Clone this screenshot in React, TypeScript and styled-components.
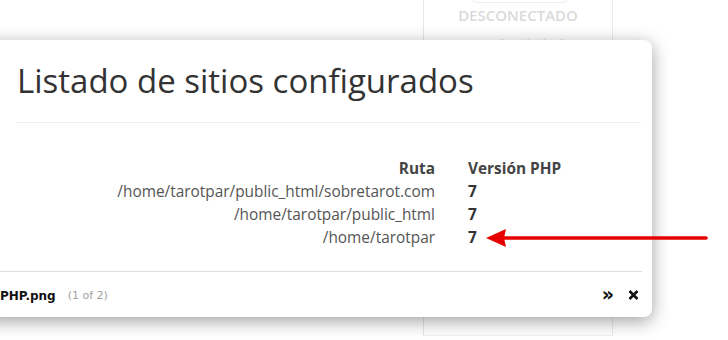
import React from "react";
import styled, { createGlobalStyle } from "styled-components";

const GlobalStyle = createGlobalStyle`
  html, body {
    margin: 0;
    padding: 0;
    background: #ffffff;
    width: 728px;
    height: 340px;
    overflow: hidden;
    font-family: "Open Sans", "Liberation Sans", sans-serif;
  }
  #root { position: relative; width: 728px; height: 340px; }
`;

const Page = styled.div`
  display: flex;
  width: 728px;
  height: 340px;
  font-family: "Open Sans", "Liberation Sans", sans-serif;
`;

const Main = styled.div`
  width: 423px;
  flex: none;
`;

const Sidebar = styled.aside`
  width: 188px;
  flex: none;
  border-left: 1px solid #e6e6e6;
  border-right: 1px solid #ececec;
  border-bottom: 1px solid #f2f2f2;
  height: 335px;
  display: flex;
  flex-direction: column;
  align-items: center;
`;

const StatusButton = styled.div`
  width: 95px;
  height: 30px;
  margin-top: -27px;
  margin-left: 48px;
  align-self: flex-start;
  border: 1px solid #eeeeee;
  border-radius: 4px;
  box-sizing: border-box;
`;

const StatusText = styled.div<{ $weight?: number }>`
  font-size: 15px;
  line-height: 20px;
  font-weight: ${(p) => p.$weight ?? 400};
  color: #dadada;
  margin-top: ${(p) => (p.$weight ? 2 : 9)}px;
`;

const Rest = styled.div`
  flex: 1;
`;

const Lightbox = styled.div`
  position: absolute;
  top: 40px;
  left: -20px;
  width: 672px;
  height: 277px;
  background: #ffffff;
  border-radius: 8px;
  box-shadow: 0 4px 18px rgba(0, 0, 0, 0.38);
  display: flex;
  flex-direction: column;
  box-sizing: border-box;
  font-family: "Open Sans", "Liberation Sans", sans-serif;
`;

const Shot = styled.div`
  flex: 1;
  padding: 19px 11px 0 20px;
`;

const Title = styled.h1`
  margin: 0 0 0 17px;
  font-family: "Open Sans", "Liberation Sans", sans-serif;
  font-weight: 400;
  font-size: 33px;
  line-height: 44px;
  color: #333333;
`;

const Rule = styled.hr`
  margin: 19px 0 0 16px;
  border: none;
  border-top: 1px solid #eeeeee;
  height: 0;
`;

const Table = styled.div`
  display: grid;
  grid-template-columns: 435px auto;
  column-gap: 33px;
  margin-top: 34px;
  font-size: 15.4px;
  line-height: 23px;
`;

const Head = styled.div<{ $right?: boolean }>`
  font-weight: 700;
  color: #444444;
  text-align: ${(p) => (p.$right ? "right" : "left")};
`;

const PathCell = styled.div`
  text-align: right;
  color: #555555;
`;

const VersionCell = styled.div`
  font-weight: 700;
  color: #333333;
`;

const Footer = styled.div`
  height: 45px;
  margin: 0 10px 0 20px;
  border-top: 1px solid #dddddd;
  display: flex;
  align-items: center;
  font-family: "DejaVu Sans", Verdana, sans-serif;
`;

const Caption = styled.span`
  font-weight: 700;
  font-size: 12px;
  color: #111111;
  margin-top: 2px;
`;

const Counter = styled.span`
  font-size: 11px;
  color: #a0a0a0;
  margin-left: 12px;
  margin-top: 2px;
`;

const Controls = styled.div`
  margin-left: auto;
  display: flex;
  align-items: center;
  gap: 14px;
  margin-right: 3px;
`;

const NextGlyph = styled.span`
  font-weight: 700;
  font-size: 19px;
  line-height: 16px;
  color: #111111;
  margin-top: -1px;
`;

const Arrow = styled.svg`
  position: absolute;
  left: 484px;
  top: 226px;
`;

const rows = [
  "/home/tarotpar/public_html/sobretarot.com",
  "/home/tarotpar/public_html",
  "/home/tarotpar",
];

export default function App() {
  return (
    <>
      <GlobalStyle />
      <Page>
        <Main />
        <Sidebar>
          <StatusButton />
          <StatusText $weight={600}>DESCONECTADO</StatusText>
          <StatusText>Marlon kaled</StatusText>
        </Sidebar>
        <Rest />
      </Page>
      <Lightbox>
        <Shot>
          <Title>Listado de sitios configurados</Title>
          <Rule />
          <Table>
            <Head $right>Ruta</Head>
            <Head>Versión PHP</Head>
            {rows.map((r) => (
              <React.Fragment key={r}>
                <PathCell>{r}</PathCell>
                <VersionCell>7</VersionCell>
              </React.Fragment>
            ))}
          </Table>
        </Shot>
        <Footer>
          <Caption>PHP.png</Caption>
          <Counter>(1 of 2)</Counter>
          <Controls>
            <NextGlyph>»</NextGlyph>
            <svg width="11" height="10" viewBox="0 0 11 10">
              <path d="M1.5 1 L9.5 9 M9.5 1 L1.5 9" stroke="#111" strokeWidth="2.6" strokeLinecap="butt" />
            </svg>
          </Controls>
        </Footer>
      </Lightbox>
      <Arrow width="226" height="24" viewBox="0 0 226 24">
        <path d="M2 12 L22 3 L20 12 L22 21 Z" fill="#e60000" />
        <line x1="20" y1="12" x2="222" y2="12" stroke="#e60000" strokeWidth="3.6" strokeLinecap="round" />
      </Arrow>
    </>
  );
}
